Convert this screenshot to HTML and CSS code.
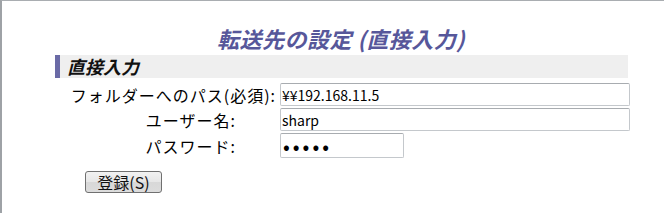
FILE: index.html
```html
<!DOCTYPE html>
<html lang="ja">
<head>
<meta charset="utf-8">
<title>転送先の設定 (直接入力)</title>
<link rel="stylesheet" href="styles.css">
</head>
<body>
<div class="frame">
  <h1 class="title">転送先の設定 (直接入力)</h1>
  <h2 class="section">直接入力</h2>
  <div class="form">
    <label class="label">フォルダーへのパス(必須):</label>
    <input class="field wide" type="text" value="¥¥192.168.11.5">
    <label class="label short">ユーザー名:</label>
    <input class="field wide" type="text" value="sharp">
    <label class="label short">パスワード:</label>
    <input class="field pw" type="password" value="12345">
  </div>
  <div class="actions">
    <button class="btn" type="button">登録(S)</button>
  </div>
</div>
</body>
</html>
```

FILE: styles.css
```css
html, body {
  margin: 0;
  padding: 0;
  background: #ffffff;
}
.frame {
  height: 213px;
  box-sizing: border-box;
  border-top: 1px solid #a9adb1;
  border-left: 2px solid #9ea2a6;
  font-family: "Noto Sans CJK JP", "Noto Sans", sans-serif;
  color: #111;
}
.title {
  margin: 0;
  padding: 22px 0 0 16px;
  height: 32px;
  text-align: center;
  font-size: 22px;
  font-weight: bold;
  font-style: italic;
  line-height: 30px;
  letter-spacing: 0.5px;
  color: #57579a;
}
.section {
  margin: 0 0 0 53px;
  width: 561px;
  height: 23px;
  padding-left: 7px;
  border-left: 5px solid #6a6aa6;
  background: #efefef;
  font-size: 18px;
  font-weight: bold;
  font-style: italic;
  line-height: 23px;
  color: #111;
}
.form {
  display: grid;
  grid-template-columns: 274px auto;
  column-gap: 4px;
  row-gap: 2px;
  margin-top: 5px;
  align-items: center;
  justify-items: start;
}
.label {
  justify-self: end;
  font-size: 16px;
  letter-spacing: 1px;
  line-height: 20px;
  color: #000;
}
.label.short {
  padding-right: 40px;
}
.field {
  box-sizing: border-box;
  margin: 0;
  height: 23px;
  padding: 0 1px;
  border: 1px solid #c4c8cc;
  border-top-color: #a8acb0;
  border-radius: 2px;
  font-family: "Noto Sans CJK JP", "Noto Sans", sans-serif;
  font-size: 14px;
  color: #000;
  background: #fff;
}
.field.wide {
  width: 350px;
}
.field.pw {
  width: 124px;
  height: 25px;
  padding: 0 2px;
  font-size: 20px;
  letter-spacing: 3px;
}
.actions {
  padding: 12px 0 0 83px;
}
.btn {
  box-sizing: border-box;
  width: 77px;
  height: 22px;
  margin: 0;
  padding: 0;
  border: 1px solid #707070;
  border-radius: 3px;
  background: linear-gradient(#f2f2f2, #e6e6e6 50%, #d8d8d8 51%, #dcdcdc);
  font-family: "Noto Sans CJK JP", "Noto Sans", sans-serif;
  font-size: 16px;
  line-height: 20px;
  color: #111;
}
```
